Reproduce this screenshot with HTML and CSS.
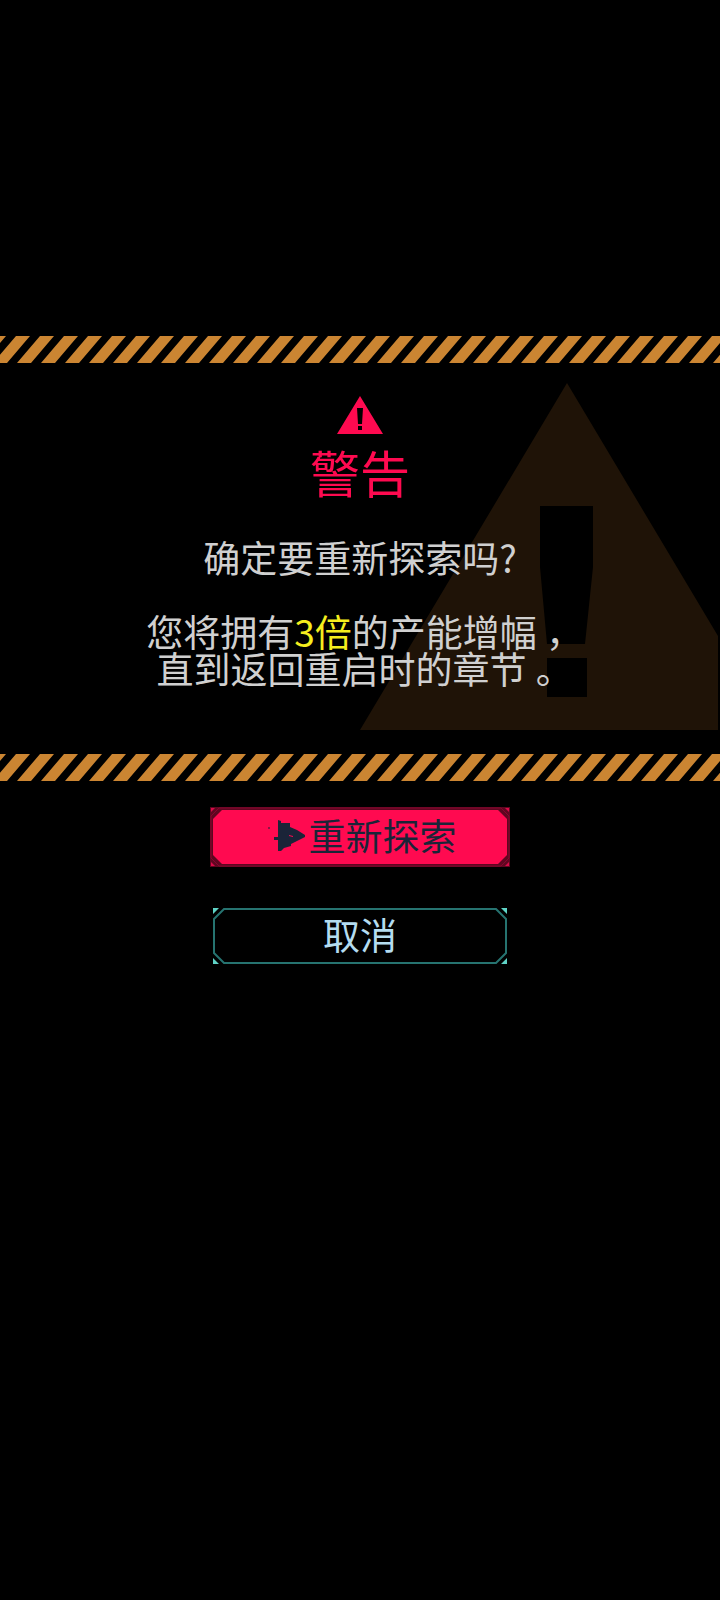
FILE: index.html
```html
<!DOCTYPE html>
<html lang="zh-CN">
<head>
    <meta charset="UTF-8">
    <meta name="viewport" content="width=device-width, initial-scale=1.0">
    <title>警告</title>
    <link rel="stylesheet" href="styles.css">
</head>
<body>
    <main class="dialog">
        <svg class="hazard" aria-hidden="true">
            <defs>
                <pattern id="stripes" width="24" height="27" patternUnits="userSpaceOnUse">
                    <path d="M-31 27L-8 0H6L-17 27ZM-7 27L16 0H30L7 27ZM17 27L40 0H54L31 27Z" fill="#cb8532"/>
                </pattern>
            </defs>
            <rect width="100%" height="27" fill="url(#stripes)"/>
        </svg>

        <section class="panel">
            <svg class="watermark" viewBox="0 0 358 347" aria-hidden="true">
                <path fill="#1f1307" fill-rule="evenodd" d="M207 0L358 253V347H0ZM180 123V184L187 261H225L233 184V123ZM187 275V314H227V275Z"/>
            </svg>
            <svg class="warning-icon" viewBox="0 0 46 38" aria-hidden="true">
                <path fill="#ff0a50" fill-rule="evenodd" d="M23 0L46 38H0ZM20 12L21 28H25L26 12ZM21 30V34H25V30Z"/>
            </svg>
            <h1>警告</h1>
            <p>确定要重新探索吗?</p>
            <p>您将拥有<em>3倍</em>的产能增幅<span class="punct">，</span><br>直到返回重启时的章节<span class="punct">。</span></p>
        </section>

        <svg class="hazard" aria-hidden="true">
            <rect width="100%" height="27" fill="url(#stripes)"/>
        </svg>

        <div class="actions">
            <button type="button" class="btn btn-primary">
                <svg class="frame" viewBox="0 0 300 60" aria-hidden="true">
                    <path fill="#5e0620" d="M0 0H300V60H0Z"/>
                    <path fill="#ff0a50" d="M12 3H288L297 12V48L288 57H12L3 48V12Z"/>
                    <path fill="none" stroke="#85062e" d="M9 1H291L299 9V51L291 59H9L1 51V9Z"/>
                    <path fill="#d80a48" d="M1 1H5L1 5ZM299 1V5L295 1ZM1 59V55L5 59ZM299 59H295L299 55Z"/>
                </svg>
                <svg class="arrow" viewBox="0 0 45 45" aria-hidden="true">
                    <path fill="#1a2438" fill-rule="evenodd" d="M14 5L17 6V8H26V12L33 15L41 20V22L33 26L27 29V31L20 33L17 36H14V25H10V22H14ZM25 20V21L29 22V21Z"/>
                    <path fill="#8a1645" d="M4 12H6V14H4Z"/>
                </svg>
                <span>重新探索</span>
            </button>
            <button type="button" class="btn btn-cancel">
                <svg class="frame" viewBox="0 0 294 56" aria-hidden="true">
                    <path fill="none" stroke="#267370" stroke-width="2" d="M11 1H283L293 11V45L283 55H11L1 45V11Z"/>
                    <path fill="#5fd3c6" d="M0 0H6L0 6ZM294 0V6L288 0ZM0 56V50L6 56ZM294 56H288L294 50Z"/>
                </svg>
                <span>取消</span>
            </button>
        </div>
    </main>
</body>
</html>
```
FILE: styles.css
```css
body {
    margin: 0;
    background-color: #000;
    color: #d0d0d0;
    font-family: "Noto Sans CJK SC", sans-serif;
}
.dialog {
    padding-top: 336px;
}
.hazard {
    display: block;
    width: 100%;
    height: 27px;
}
.panel {
    position: relative;
    display: flex;
    flex-direction: column;
    align-items: center;
    padding: 33px 16px 67px;
    text-align: center;
}
.watermark {
    position: absolute;
    right: 2px;
    bottom: 24px;
    width: 358px;
}
.warning-icon {
    width: 46px;
    height: 38px;
}
h1 {
    position: relative;
    margin: 12px 0 43px;
    color: #ff0a50;
    font-size: 50px;
    font-weight: 400;
    line-height: 50px;
}
p {
    position: relative;
    margin: 0 0 37px;
    font-size: 37px;
    line-height: 37px;
}
p:last-child {
    margin-bottom: 0;
}
em {
    color: #f5ee1e;
    font-style: normal;
}
/* half-width punctuation centred in a full cell */
.punct {
    display: inline-block;
    width: 37px;
    font-feature-settings: "halt";
}
.actions {
    display: flex;
    flex-direction: column;
    align-items: center;
    gap: 41px;
    padding: 26px 16px;
}
.btn {
    position: relative;
    display: flex;
    align-items: center;
    justify-content: center;
    padding: 0;
    border: none;
    background: none;
    font-family: inherit;
    font-size: 37px;
    line-height: 37px;
    cursor: pointer;
}
.btn span {
    position: relative;
    padding-bottom: 4px;
}
.frame {
    position: absolute;
    inset: 0;
    width: 100%;
    height: 100%;
}
.btn-primary {
    width: 300px;
    height: 60px;
    color: #1a2438;
}
.arrow {
    position: relative;
    width: 45px;
    height: 45px;
}
.btn-cancel {
    width: 294px;
    height: 56px;
    color: #b4dcf0;
}
```
